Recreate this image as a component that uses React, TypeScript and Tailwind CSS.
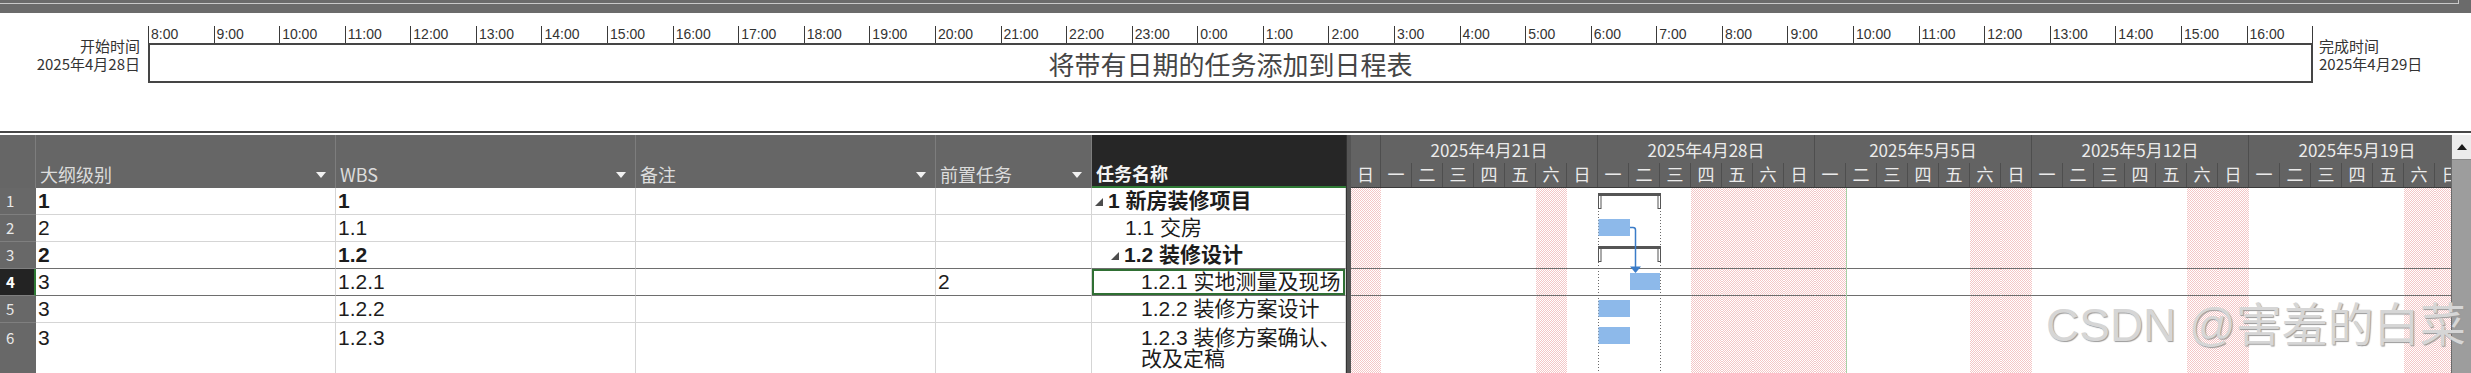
import React from 'react';

const hours = [8, 9, 10, 11, 12, 13, 14, 15, 16, 17, 18, 19, 20, 21, 22, 23, 0, 1, 2, 3, 4, 5, 6, 7, 8, 9, 10, 11, 12, 13, 14, 15, 16];

const week = ['一', '二', '三', '四', '五', '六', '日'];
const days = ['日', ...week, ...week, ...week, ...week, ...week];
// non-working days (weekends + May Day holiday)
const shaded = new Set([0, 6, 11, 12, 13, 14, 15, 20, 21, 27, 28, 34, 35]);
const weeks = ['2025年4月21日', '2025年4月28日', '2025年5月5日', '2025年5月12日', '2025年5月19日'];

type Row = {
  n: number;
  lvl: string;
  wbs: string;
  pred: string;
  name: string;
  name2?: string;
  indent: string;
  summary?: boolean;
  bold?: boolean;
  selected?: boolean;
  tall?: boolean;
};

const rows: Row[] = [
  { n: 1, lvl: '1', wbs: '1', pred: '', name: '1 新房装修项目', indent: 'pl-[3px]', summary: true, bold: true },
  { n: 2, lvl: '2', wbs: '1.1', pred: '', name: '1.1 交房', indent: 'pl-[33px]' },
  { n: 3, lvl: '2', wbs: '1.2', pred: '', name: '1.2 装修设计', indent: 'pl-[19px]', summary: true, bold: true },
  { n: 4, lvl: '3', wbs: '1.2.1', pred: '2', name: '1.2.1 实地测量及现场', indent: 'pl-[49px]', selected: true },
  { n: 5, lvl: '3', wbs: '1.2.2', pred: '', name: '1.2.2 装修方案设计', indent: 'pl-[49px]' },
  { n: 6, lvl: '3', wbs: '1.2.3', pred: '', name: '1.2.3 装修方案确认、', name2: '改及定稿', indent: 'pl-[49px]', tall: true },
];

const DropArrow = () => (
  <svg width="10" height="6" viewBox="0 0 10 6" className="mb-[6px] shrink-0">
    <polygon points="0,0 10,0 5,6" fill="#f2f2f2" />
  </svg>
);

const Outline = () => (
  <svg width="8" height="8" viewBox="0 0 8 8" className="mr-[5px] mt-[10px] shrink-0">
    <polygon points="8,0 8,8 0,8" fill="#4d4d4d" />
  </svg>
);

function HeaderCell({ w, label, arrow = true }: { w: string; label: string; arrow?: boolean }) {
  return (
    <div className={`${w} h-full flex items-end justify-between pl-[4px] pr-[9px] pb-[4px] border-r border-[#7d7d7d] text-[18px] leading-[20px] text-[#dcdcdc]`}>
      <span>{label}</span>
      {arrow && <DropArrow />}
    </div>
  );
}

function Timeline() {
  return (
    <div className="flex h-[118px] shrink-0 font-['Noto_Sans_CJK_SC',sans-serif] text-[#333]">
      <div className="w-[148px] mt-[24px] pr-[8px] text-right text-[15px] leading-[18px]">
        <div>开始时间</div>
        <div>2025年4月28日</div>
      </div>
      <div className="w-[2165px] mt-[13px] flex flex-col">
        <div className="flex h-[17px] border-r border-[#3a3a3a] font-['Liberation_Sans',sans-serif] text-[14px] leading-[15px]">
          {hours.map((h, i) => (
            <div key={i} className="flex-1 border-l border-[#3a3a3a] pl-[2px] pt-[1px]">
              {h}:00
            </div>
          ))}
        </div>
        <div className="h-[40px] border-2 border-[#454545] flex items-center justify-center text-[26px] text-[#454545]">
          将带有日期的任务添加到日程表
        </div>
      </div>
      <div className="mt-[24px] pl-[6px] text-[15px] leading-[18px]">
        <div>完成时间</div>
        <div>2025年4月29日</div>
      </div>
    </div>
  );
}

function Sheet() {
  return (
    <div className="w-[1346px] h-full flex flex-col overflow-hidden">
      <div className="flex h-[53px] shrink-0 bg-[#666666] font-['Noto_Sans_CJK_SC',sans-serif]">
        <div className="w-[36px] h-full border-r border-[#7d7d7d]" />
        <HeaderCell w="w-[300px]" label="大纲级别" />
        <HeaderCell w="w-[300px]" label="WBS" />
        <HeaderCell w="w-[300px]" label="备注" />
        <HeaderCell w="w-[156px]" label="前置任务" />
        <div className="w-[254px] h-full bg-[#262626] border-b-2 border-[#2f7a35] flex items-end pl-[4px] pb-[3px] text-[18px] leading-[20px] font-bold text-[#f4f4f4]">
          任务名称
        </div>
      </div>
      <div className="flex-1 flex flex-col font-['Liberation_Sans','Noto_Sans_CJK_SC',sans-serif] text-[21px] text-[#1c1c1c]">
        {rows.map((r) => {
          const line = r.n === 3 || r.n === 4 ? 'border-b-[#6e6e6e]' : 'border-b-[#d5d5d5]';
          const h = r.tall ? 'pt-[4px] leading-[21px]' : 'leading-[26px]';
          const cell = `h-full border-r border-r-[#d5d5d5] border-b ${line} pl-[2px] overflow-hidden whitespace-nowrap`;
          const weight = r.bold ? 'font-bold' : '';
          return (
            <div key={r.n} className={`flex shrink-0 ${r.tall ? 'h-[60px]' : 'h-[27px]'}`}>
              <div
                className={`w-[36px] h-full pl-[6px] font-['Noto_Sans_CJK_SC',sans-serif] text-[15px] border-b border-b-[#7f7f7f] ${h} ${
                  r.selected ? 'bg-[#232323] text-white font-bold border-r-2 border-r-[#2f7a35]' : 'bg-[#686868] text-[#e8e8e8]'
                }`}
              >
                {r.n}
              </div>
              <div className={`w-[300px] ${cell} ${h} ${weight}`}>{r.lvl}</div>
              <div className={`w-[300px] ${cell} ${h} ${weight}`}>{r.wbs}</div>
              <div className={`w-[300px] ${cell} ${h}`} />
              <div className={`w-[156px] ${cell} ${h}`}>{r.pred}</div>
              <div
                className={`w-[254px] ${cell} ${h} ${weight} ${r.indent} flex items-start ${
                  r.selected ? 'ring-2 ring-inset ring-[#2f6f33]' : ''
                }`}
              >
                {r.summary && <Outline />}
                {r.name2 ? (
                  <div>
                    <div>{r.name}</div>
                    <div>{r.name2}</div>
                  </div>
                ) : (
                  <span>{r.name}</span>
                )}
              </div>
            </div>
          );
        })}
      </div>
    </div>
  );
}

function Gantt() {
  return (
    <div className="w-[1100px] h-full flex flex-col overflow-hidden">
      <div className="h-[53px] shrink-0 bg-[#636363] border-b border-[#3a3a3a] font-['Noto_Sans_CJK_SC',sans-serif] text-[#ebebeb] flex flex-col">
        <div className="h-[28px] flex shrink-0">
          <div className="w-[30px] shrink-0 border-r border-[#4e4e4e]" />
          {weeks.map((w) => (
            <div key={w} className="w-[217px] shrink-0 border-r border-[#4e4e4e] text-center text-[17px] leading-[30px]">
              {w}
            </div>
          ))}
        </div>
        <div className="flex-1 flex">
          {days.map((d, i) => (
            <div
              key={i}
              className={`${i === 0 ? 'w-[30px]' : 'w-[31px]'} shrink-0 border-r border-[#4e4e4e] text-center text-[17px] leading-[22px]`}
            >
              {d}
            </div>
          ))}
        </div>
      </div>
      <div className="relative flex-1">
        <div className="flex h-full">
          {days.map((_, i) => (
            <div
              key={i}
              className={`${i === 0 ? 'w-[30px]' : 'w-[31px]'} shrink-0 h-full ${
                shaded.has(i)
                  ? 'bg-[image:repeating-conic-gradient(#f4c6c6_0%_25%,#ffffff_0%_50%)] bg-[length:2px_2px]'
                  : 'bg-white'
              }`}
            />
          ))}
        </div>
        <svg className="absolute inset-0" width="1100" height="185" viewBox="0 0 1100 185">
          <line x1="0" y1="80.5" x2="1100" y2="80.5" stroke="#6e6e6e" />
          <line x1="0" y1="107.5" x2="1100" y2="107.5" stroke="#6e6e6e" />
          <line x1="495.5" y1="0" x2="495.5" y2="185" stroke="#a8d2a8" />
          <line x1="247.5" y1="20" x2="247.5" y2="185" stroke="#6a6a6a" strokeDasharray="1 2" />
          <line x1="309.5" y1="20" x2="309.5" y2="185" stroke="#6a6a6a" strokeDasharray="1 2" />
          {/* summary brackets */}
          {[5, 58].map((y) => (
            <g key={y}>
              <rect x="247" y={y} width="63" height="3" fill="#555" />
              <rect x="247.5" y={y + 2.5} width="2.5" height="13" fill="#fff" stroke="#555" strokeWidth="1" />
              <rect x="307" y={y + 2.5} width="2.5" height="13" fill="#fff" stroke="#555" strokeWidth="1" />
            </g>
          ))}
          {/* task bars */}
          <rect x="247.5" y="31" width="31.5" height="17" fill="#8db9ea" />
          <rect x="279" y="85" width="30" height="17" fill="#8db9ea" />
          <rect x="247.5" y="112" width="31.5" height="17" fill="#8db9ea" />
          <rect x="247.5" y="139" width="31.5" height="17" fill="#8db9ea" />
          {/* dependency link */}
          <path d="M279 39.5 H282 Q284.5 39.5 284.5 42 V79" fill="none" stroke="#3b7cc8" strokeWidth="1.5" />
          <polygon points="279,78.5 290,78.5 284.5,85" fill="#3b7cc8" />
        </svg>
      </div>
    </div>
  );
}

export default function App() {
  return (
    <div className="relative w-[2471px] h-[373px] overflow-hidden bg-white flex flex-col">
      <div className="h-[13px] shrink-0 bg-[#6b6b6b]">
        <div className="w-[2459px] h-[4px] border-b border-r border-[#c9c9c9]" />
      </div>
      <Timeline />
      <div className="border-t-2 border-[#474747] pt-[2px] h-[242px] shrink-0 flex">
        <Sheet />
        <div className="w-[5px] h-full bg-[#555555] border-l border-[#333333]" />
        <Gantt />
        <div className="w-[20px] h-full bg-[#9d9d9d] border-l border-[#6a6a6a] flex flex-col">
          <div className="h-[25px] bg-[#ececec] border-b border-[#8a8a8a] flex items-center justify-center">
            <svg width="10" height="6" viewBox="0 0 10 6">
              <polygon points="5,0 10,6 0,6" fill="#1a1a1a" />
            </svg>
          </div>
        </div>
      </div>
      <div className="pointer-events-none absolute left-[2046px] top-[293px] whitespace-nowrap font-['Liberation_Sans','Noto_Sans_CJK_SC',sans-serif] text-[46px] leading-[64px] text-[#d6d6d6] [text-shadow:1px_1px_1px_#9a9a9a]">
        CSDN @害羞的白菜
      </div>
    </div>
  );
}
